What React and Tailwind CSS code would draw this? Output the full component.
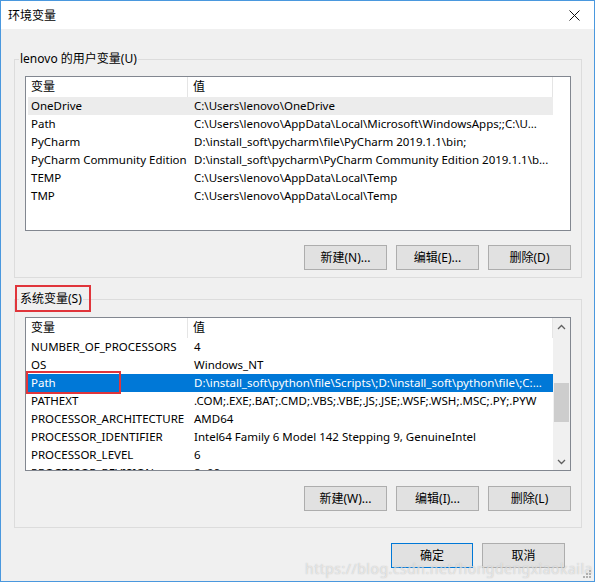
import React from "react";

const userRows = [
  ["OneDrive", "C:\\Users\\lenovo\\OneDrive"],
  ["Path", "C:\\Users\\lenovo\\AppData\\Local\\Microsoft\\WindowsApps;;C:\\U..."],
  ["PyCharm", "D:\\install_soft\\pycharm\\file\\PyCharm 2019.1.1\\bin;"],
  ["PyCharm Community Edition", "D:\\install_soft\\pycharm\\PyCharm Community Edition 2019.1.1\\b..."],
  ["TEMP", "C:\\Users\\lenovo\\AppData\\Local\\Temp"],
  ["TMP", "C:\\Users\\lenovo\\AppData\\Local\\Temp"],
];

const sysRows = [
  ["NUMBER_OF_PROCESSORS", "4"],
  ["OS", "Windows_NT"],
  ["Path", "D:\\install_soft\\python\\file\\Scripts\\;D:\\install_soft\\python\\file\\;C:..."],
  ["PATHEXT", ".COM;.EXE;.BAT;.CMD;.VBS;.VBE;.JS;.JSE;.WSF;.WSH;.MSC;.PY;.PYW"],
  ["PROCESSOR_ARCHITECTURE", "AMD64"],
  ["PROCESSOR_IDENTIFIER", "Intel64 Family 6 Model 142 Stepping 9, GenuineIntel"],
  ["PROCESSOR_LEVEL", "6"],
  ["PROCESSOR_REVISION", "8e09"],
];

function Btn({ children, focused }) {
  return (
    <div
      className={
        "h-[25px] flex items-center justify-center bg-[#e1e1e1] border text-[12px] " +
        (focused ? "border-[#0078d7] w-[82px]" : "border-[#adadad] w-[83px]")
      }
    >
      {children}
    </div>
  );
}

function Header() {
  return (
    <div className="h-[20px] flex shrink-0 bg-white text-[12px]">
      <div className="w-[162px] border-r border-[#e5e5e5] pl-[5px] leading-[20px]">变量</div>
      <div className="flex-1 border-r border-[#e5e5e5] pl-[5px] leading-[20px]">值</div>
    </div>
  );
}

function Rows({ rows, selected, selClass }) {
  return (
    <div className="pl-[2px] text-[11.5px]">
      {rows.map(([a, b], i) => (
        <div
          key={i}
          className={
            "h-[18px] leading-[18px] flex whitespace-nowrap " +
            (i === selected ? selClass : "")
          }
        >
          <div className="w-[160px] pl-[3px] overflow-hidden">{a}</div>
          <div className="flex-1 pl-[6px] overflow-hidden">{b}</div>
        </div>
      ))}
    </div>
  );
}

function Chevron({ up }) {
  return (
    <svg width="9" height="6" viewBox="0 0 9 6">
      <path
        d={up ? "M1 5 L4.5 1.5 L8 5" : "M1 1 L4.5 4.5 L8 1"}
        fill="none"
        stroke="#606060"
        strokeWidth="1.3"
      />
    </svg>
  );
}

export default function App() {
  return (
    <div className="w-[595px] h-[582px] border border-[#4a98de] bg-[#f0f0f0] flex flex-col relative overflow-hidden text-black font-['Noto_Sans','Noto_Sans_CJK_SC',sans-serif] text-[12px]">
      {/* title bar */}
      <div className="h-[28px] bg-white flex items-center justify-between pl-[7px] pr-[14px] shrink-0">
        <span className="text-[12px] font-['Noto_Sans_CJK_SC',sans-serif]">环境变量</span>
        <svg width="11" height="11" viewBox="0 0 11 11">
          <path d="M0.5 0.5 L10.5 10.5 M10.5 0.5 L0.5 10.5" stroke="#111" strokeWidth="1" />
        </svg>
      </div>

      <div className="flex-1 flex flex-col pl-[13px] pr-[12px]">
        {/* user vars */}
        <fieldset className="mt-[21px] border border-[#dcdcdc] pt-[8px] px-[10px] pb-[7px]">
          <legend className="ml-[-6px] px-[1px] text-[12px] leading-[18px]">lenovo 的用户变量(U)</legend>
          <div className="h-[155px] border border-[#828790] bg-white flex">
            <div className="w-[527px] flex flex-col overflow-hidden">
              <Header />
              <Rows rows={userRows} selected={0} selClass="bg-[#ececec]" />
            </div>
          </div>
          <div className="mt-[14px] flex justify-end gap-[9px]">
            <Btn>新建(N)...</Btn>
            <Btn>编辑(E)...</Btn>
            <Btn>删除(D)</Btn>
          </div>
        </fieldset>

        {/* system vars */}
        <fieldset className="mt-[12px] border border-[#dcdcdc] pt-[9px] px-[10px] pb-[16px]">
          <legend className="ml-[-6px] px-[1px] text-[12px] leading-[18px]">系统变量(S)</legend>
          <div className="h-[154px] border border-[#828790] bg-white flex">
            <div className="w-[527px] flex flex-col overflow-hidden">
              <Header />
              <Rows rows={sysRows} selected={2} selClass="bg-[#0078d7] text-white" />
            </div>
            <div className="w-[17px] bg-[#f0f0f0] flex flex-col">
              <div className="h-[17px] flex items-center justify-center">
                <Chevron up />
              </div>
              <div className="flex-1 px-[1px]">
                <div className="mt-[48px] h-[39px] bg-[#cdcdcd]" />
              </div>
              <div className="h-[17px] flex items-center justify-center">
                <Chevron />
              </div>
            </div>
          </div>
          <div className="mt-[15px] flex justify-end gap-[9px]">
            <Btn>新建(W)...</Btn>
            <Btn>编辑(I)...</Btn>
            <Btn>删除(L)</Btn>
          </div>
        </fieldset>

        {/* footer */}
        <div className="mt-[15px] flex justify-end gap-[9px] pr-[17px]">
          <Btn focused>确定</Btn>
          <Btn>取消</Btn>
        </div>
      </div>

      {/* annotations */}
      <div className="absolute left-[14px] top-[284px] w-[76px] h-[27px] border-2 border-[#e0353b]" />
      <div className="absolute left-[25px] top-[370px] w-[95px] h-[23px] border-2 border-[#e0353b]" />

      {/* watermark */}
      <div className="absolute left-[304px] top-[557px] text-[14px] text-white/60 tracking-[0.5px] whitespace-nowrap [text-shadow:0_0_1px_rgba(120,120,120,0.5)]">
        https://blog.csdn.net/hongdengxiaokaila
      </div>

      {/* resize grip */}
      <svg className="absolute right-[2px] bottom-[2px]" width="10" height="10" viewBox="0 0 10 10">
        <g fill="#b0b0b0">
          <rect x="7" y="1" width="2" height="2" />
          <rect x="4" y="4" width="2" height="2" />
          <rect x="7" y="4" width="2" height="2" />
          <rect x="1" y="7" width="2" height="2" />
          <rect x="4" y="7" width="2" height="2" />
          <rect x="7" y="7" width="2" height="2" />
        </g>
      </svg>
    </div>
  );
}
